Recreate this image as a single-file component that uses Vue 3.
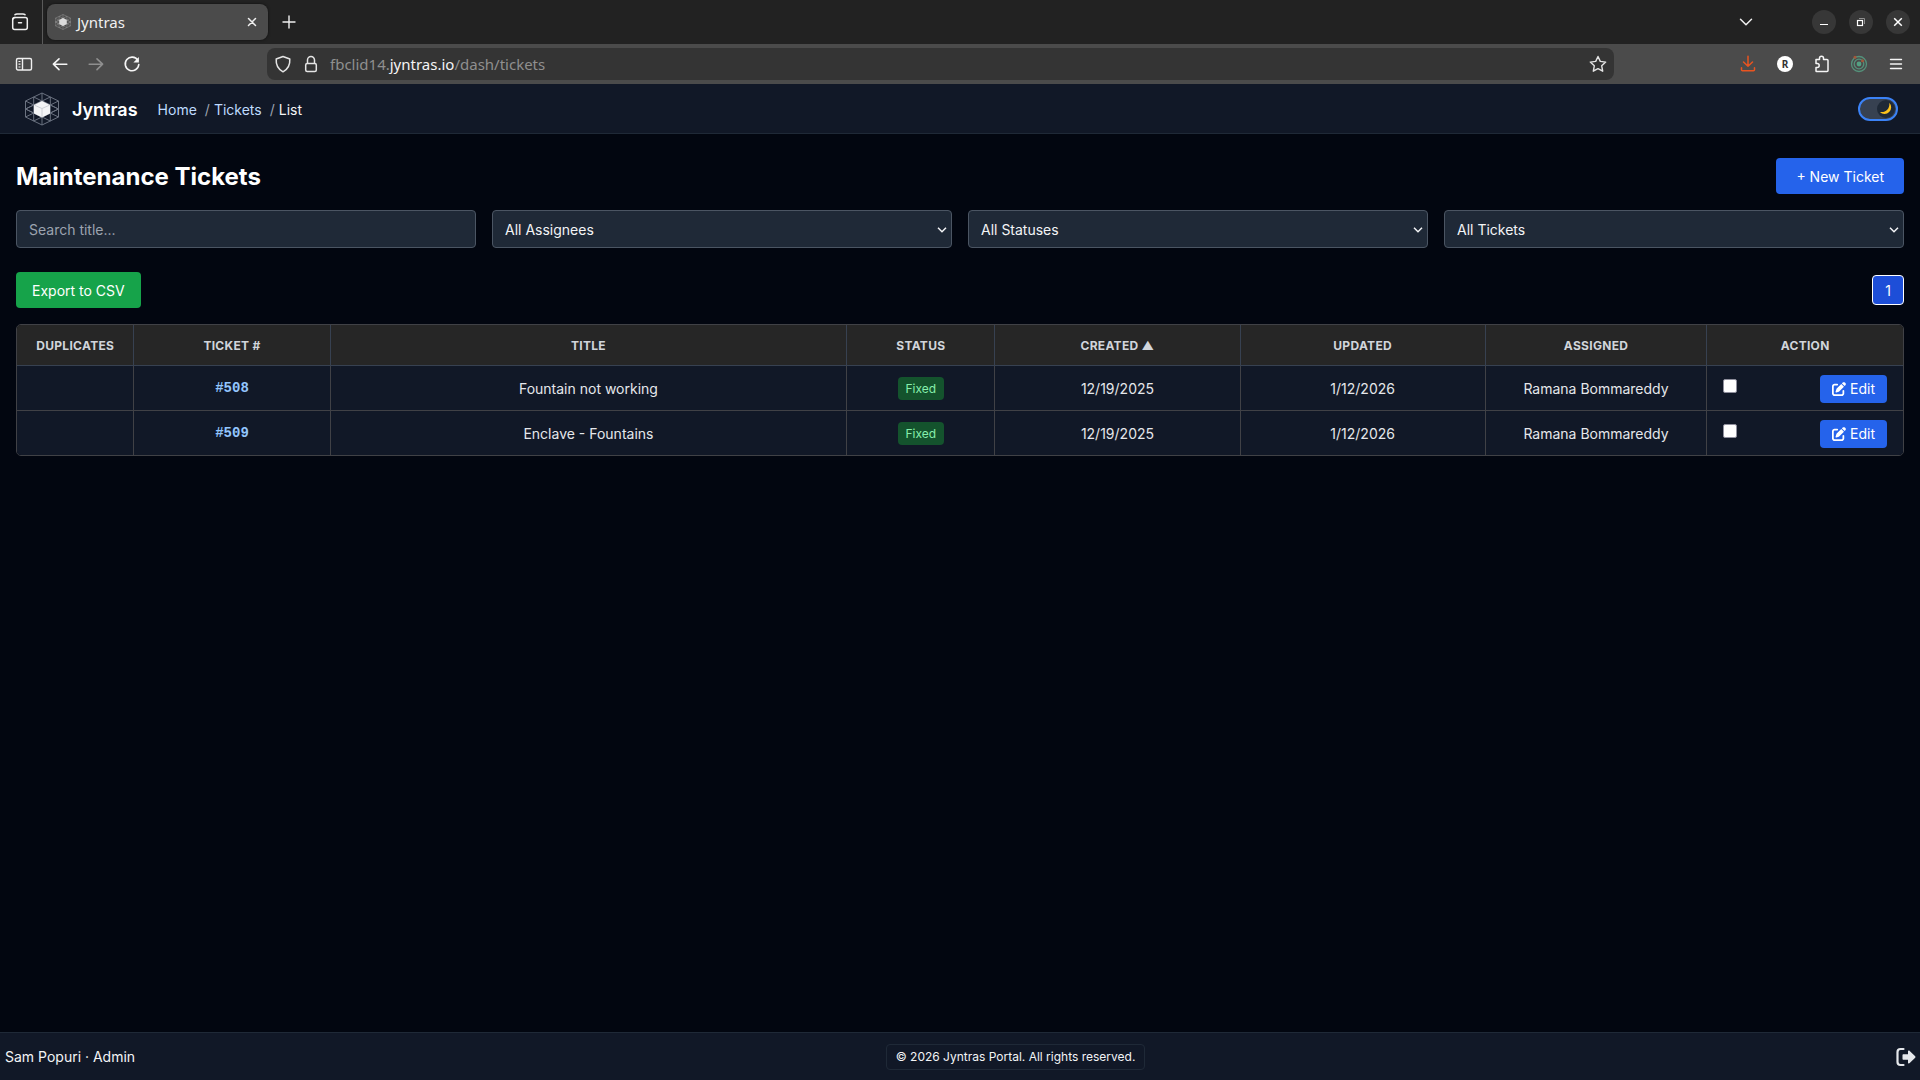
<template>
  <div class="window">
    <div class="tab-strip">
      <button class="chrome-btn view-btn" aria-label="Recent browsing">
        <svg width="18" height="18" viewBox="0 0 18 18" fill="none" stroke="#f0f0f0" stroke-width="1.5" stroke-linecap="round">
          <path d="M4 1.7C4.600 1.200 5.200 1 6 1h6c.8 0 1.400.2 2 .7" />
          <rect x="1.700" y="4.500" width="14.600" height="12" rx="2" />
          <path d="M2 6c.4-1 1-1.500 2-1.500M7.500 9.700h3" />
        </svg>
      </button>
      <div class="tab">
        <svg class="favicon" viewBox="0 0 34 34">
          <g fill="none" stroke="#8b8b8b" stroke-width="1.200">
            <path v-for="d in logoLines" :key="d" :d="d" />
          </g>
          <path d="M17 8.500L25 12.500V21L17 25.500L9 21V12.500Z" fill="#dcdcdc" />
        </svg>
        <span class="tab-title">Jyntras</span>
        <button class="chrome-btn" aria-label="Close tab">
          <svg width="10" height="10" viewBox="0 0 10 10" stroke="#f0f0f0" stroke-width="1.500" stroke-linecap="round"><path d="M1.500 1.500l7 7M8.500 1.500l-7 7" /></svg>
        </button>
      </div>
      <button class="chrome-btn new-tab" aria-label="New tab">
        <svg width="14" height="14" viewBox="0 0 14 14" stroke="#f0f0f0" stroke-width="1.400" stroke-linecap="round"><path d="M7 1v12M1 7h12" /></svg>
      </button>
      <div class="window-controls">
        <button class="chrome-btn all-tabs" aria-label="List all tabs">
          <svg width="14" height="8" viewBox="0 0 14 8" fill="none" stroke="#f0f0f0" stroke-width="1.500" stroke-linecap="round" stroke-linejoin="round"><path d="M1.500 1.200L7 6.700l5.500-5.500" /></svg>
        </button>
        <button class="chrome-btn round" aria-label="Minimize">
          <svg width="10" height="10" viewBox="0 0 10 10" stroke="#fff"><path d="M1 7.500h8" /></svg>
        </button>
        <button class="chrome-btn round" aria-label="Restore">
          <svg width="10" height="10" viewBox="0 0 10 10" fill="none"><path d="M3 1.500h5.500V7" stroke="#8f8f8f" /><rect x="1.500" y="3.500" width="5" height="5" stroke="#fff" stroke-width="1.200" /></svg>
        </button>
        <button class="chrome-btn round" aria-label="Close window">
          <svg width="10" height="10" viewBox="0 0 10 10" stroke="#fff" stroke-width="1.500"><path d="M1.200 1.200l7.600 7.600M8.800 1.200L1.200 8.800" /></svg>
        </button>
      </div>
    </div>

    <div class="toolbar">
      <div class="nav-buttons">
        <button class="chrome-btn" aria-label="Sidebar">
          <svg width="18" height="18" viewBox="0 0 18 18" fill="none" stroke="#f0f0f0" stroke-width="1.400"><rect x="1.500" y="3.500" width="15" height="11.500" rx="1.500" /><path d="M7.500 3.500V15" /><path d="M3.500 6.500h2M3.500 9.200h2M3.500 12h2" stroke-width="1.200" /></svg>
        </button>
        <button class="chrome-btn" aria-label="Back">
          <svg width="18" height="18" viewBox="0 0 18 18" fill="none" stroke="#f5f5f5" stroke-width="1.600" stroke-linecap="round" stroke-linejoin="round"><path d="M15.800 9.200H2.400M8 3.800L2.400 9.200 8 14.600" /></svg>
        </button>
        <button class="chrome-btn" aria-label="Forward" disabled>
          <svg width="18" height="18" viewBox="0 0 18 18" fill="none" stroke="#8f8f8f" stroke-width="1.600" stroke-linecap="round" stroke-linejoin="round"><path d="M2.200 9.200h13.400M10 3.800l5.600 5.400-5.600 5.400" /></svg>
        </button>
        <button class="chrome-btn" aria-label="Reload">
          <svg width="18" height="18" viewBox="0 0 18 18" fill="none" stroke="#f5f5f5" stroke-width="1.600" stroke-linecap="round"><path d="M14.800 5.300A6.800 6.800 0 1 0 15.800 9.500" /><path d="M15.900 2v5.500h-5.500z" fill="#f5f5f5" stroke="none" /></svg>
        </button>
      </div>
      <div class="url-bar">
        <svg width="18" height="18" viewBox="0 0 18 18" fill="none" stroke="#e4e4e4" stroke-width="1.500" stroke-linejoin="round"><path d="M9 1.500L15.800 4c.4 5.500-1.600 10-6.800 12.800C3.800 14 1.800 9.500 2.200 4Z" /></svg>
        <svg width="18" height="18" viewBox="0 0 18 18" fill="none" stroke="#e4e4e4" stroke-width="1.500"><rect x="3.700" y="8.500" width="10.600" height="8" rx="1.500" /><path d="M5.500 8.500V5a3.500 3.500 0 0 1 7 0v3.500" /></svg>
        <span class="url">fbclid14.<b>jyntras.io</b>/dash/tickets</span>
        <button class="chrome-btn" aria-label="Bookmark this page">
          <svg width="18" height="18" viewBox="0 0 18 18" fill="none" stroke="#e4e4e4" stroke-width="1.400" stroke-linejoin="round"><path d="M9 1.500l2.300 4.900 5.400.7-4 3.700 1 5.400L9 13.600l-4.700 2.600 1-5.400-4-3.700 5.400-.7z" /></svg>
        </button>
      </div>
      <div class="extensions">
        <button class="chrome-btn" aria-label="Downloads">
          <svg width="18" height="18" viewBox="0 0 18 18" fill="none" stroke="#e95420" stroke-width="1.500" stroke-linecap="round" stroke-linejoin="round"><path d="M9 1.200v10M4.500 7L9 11.300 13.500 7M2.500 12.800v2c0 .6.500 1 1 1h11c.5 0 1-.4 1-1v-2" /></svg>
        </button>
        <button class="chrome-btn r-badge" aria-label="R extension">R</button>
        <button class="chrome-btn" aria-label="Extensions">
          <svg width="18" height="18" viewBox="0 0 18 18" fill="none" stroke="#f5f5f5" stroke-width="1.500" stroke-linejoin="round"><path d="M3 4.500h3.500V3.200a2 2 0 0 1 4 0v1.300h3.500a1 1 0 0 1 1 1V15.500a1 1 0 0 1-1 1H3.500a.5.500 0 0 1-.5-.5v-3.500h1.200a2 2 0 0 0 0-4H3z" /></svg>
        </button>
        <button class="chrome-btn" aria-label="Tracker">
          <svg width="18" height="18" viewBox="0 0 18 18" fill="none" stroke="#54917a" stroke-width="1.300"><circle cx="9" cy="9" r="7.500" /><circle cx="9" cy="9" r="4.800" /><circle cx="9" cy="9" r="2.400" fill="#54a082" stroke="none" /><circle cx="5" cy="2.300" r="1.500" fill="#a4573a" stroke="none" /><circle cx="12.500" cy="5.800" r="1.500" fill="#a4573a" stroke="none" /></svg>
        </button>
        <button class="chrome-btn" aria-label="Menu">
          <svg width="18" height="18" viewBox="0 0 18 18" stroke="#f5f5f5" stroke-width="1.400" stroke-linecap="round"><path d="M3.500 4.500h11M3.500 9h11M3.500 13.500h11" /></svg>
        </button>
      </div>
    </div>

    <header class="app-header">
      <svg class="logo" viewBox="0 0 34 34">
        <g fill="none" stroke="#6b7280" stroke-width="1">
          <path v-for="d in logoLines" :key="d" :d="d" />
        </g>
        <path d="M17 9L25 13V21.500L17 25.500L9 21.500V13Z" fill="#f3f4f6" />
        <path d="M9.500 13.200L17 16.500L24.500 13.200M17 16.500V25" fill="none" stroke="#c3c7ce" stroke-width=".8" />
      </svg>
      <span class="brand">Jyntras</span>
      <nav class="breadcrumb">
        <a href="#">Home</a>
        <span class="slash">/</span>
        <a href="#">Tickets</a>
        <span class="slash">/</span>
        <span class="current">List</span>
      </nav>
      <button class="theme-toggle" role="switch" :aria-checked="dark" aria-label="Dark mode" @click="dark = !dark">
        <span class="knob">
          <svg width="14" height="14" viewBox="0 0 14 14"><path d="M10.300.8a6.500 6.500 0 1 1-9.400 9.100C6.500 11 11 7 10.300.8Z" fill="#fcc21b" /></svg>
        </span>
      </button>
    </header>

    <main class="content">
      <div class="row">
        <h1>Maintenance Tickets</h1>
        <button class="btn btn-new">+ New Ticket</button>
      </div>

      <div class="filters">
        <input v-model="search" type="text" class="field" placeholder="Search title..." aria-label="Search title" />
        <div v-for="label in filters" :key="label" class="select-wrap">
          <select class="field" :aria-label="label">
            <option>{{ label }}</option>
          </select>
          <svg class="chevron" width="10" height="6" viewBox="0 0 10 6" fill="none" stroke="#f3f4f6" stroke-width="1.500"><path d="M1 .8L5 4.800 9 .8" /></svg>
        </div>
      </div>

      <div class="row export-row">
        <button class="btn btn-export">Export to CSV</button>
        <button class="page">1</button>
      </div>

      <div class="table-wrap">
        <table>
          <colgroup>
            <col v-for="c in columns" :key="c.label" :style="{ width: c.width }" />
          </colgroup>
          <thead>
            <tr>
              <th v-for="c in columns" :key="c.label">{{ c.label }}</th>
            </tr>
          </thead>
          <tbody>
            <tr v-for="t in visibleTickets" :key="t.id">
              <td></td>
              <td><a href="#" class="ticket-link">#{{ t.id }}</a></td>
              <td>{{ t.title }}</td>
              <td><span class="badge">{{ t.status }}</span></td>
              <td>{{ t.created }}</td>
              <td>{{ t.updated }}</td>
              <td>{{ t.assigned }}</td>
              <td>
                <div class="actions">
                  <input v-model="selected" type="checkbox" :value="t.id" :aria-label="'Select ticket ' + t.id" />
                  <button class="edit">
                    <svg width="14" height="14" viewBox="0 0 512 512" fill="#fff"><path d="M471.600 21.700c-21.900-21.900-57.300-21.900-79.200 0L362.300 51.700l97.900 97.900 30.100-30.100c21.900-21.900 21.900-57.300 0-79.200L471.600 21.700zm-299.200 220c-6.100 6.100-10.800 13.600-13.500 21.900l-29.600 88.800c-2.900 8.600-.6 18.100 5.800 24.600s15.900 8.700 24.600 5.800l88.800-29.600c8.200-2.700 15.700-7.400 21.900-13.500L437.700 172.300 339.700 74.300 172.400 241.700zM96 64C43 64 0 107 0 160V416c0 53 43 96 96 96H352c53 0 96-43 96-96V320c0-17.700-14.300-32-32-32s-32 14.300-32 32v96c0 17.700-14.300 32-32 32H96c-17.700 0-32-14.300-32-32V160c0-17.700 14.300-32 32-32h96c17.700 0 32-14.300 32-32s-14.300-32-32-32H96z" /></svg>
                    Edit
                  </button>
                </div>
              </td>
            </tr>
          </tbody>
        </table>
      </div>
    </main>

    <footer class="app-footer">
      <span class="user">Sam Popuri · Admin</span>
      <span class="copyright">© 2026 Jyntras Portal. All rights reserved.</span>
      <button class="logout" aria-label="Log out">
        <svg width="20" height="20" viewBox="0 0 20 20"><path d="M7.500 2H4.500C2.800 2 1.500 3.200 1.500 5v10c0 1.800 1.300 3 3 3h3" fill="none" stroke="#e5e7eb" stroke-width="2.200" stroke-linecap="round" /><path d="M6.500 8.200c0-.6.400-1 1-1H12V4.600c0-1 1-1.400 1.700-.7l5.500 5.400c.4.400.4 1 0 1.400l-5.500 5.400c-.7.700-1.700.3-1.700-.7v-2.600H7.500c-.6 0-1-.4-1-1z" fill="#e5e7eb" /></svg>
      </button>
    </footer>
  </div>
</template>

<script setup>
import { ref, computed } from 'vue'

const dark = ref(true)
const search = ref('')
const selected = ref([])

const filters = ['All Assignees', 'All Statuses', 'All Tickets']

const columns = [
  { label: 'Duplicates', width: '6.2%' },
  { label: 'Ticket #', width: '10.4%' },
  { label: 'Title', width: '27.4%' },
  { label: 'Status', width: '7.85%' },
  { label: 'Created ▲', width: '13%' },
  { label: 'Updated', width: '13%' },
  { label: 'Assigned', width: '11.75%' },
  { label: 'Action', width: '10.4%' }
]

const tickets = [
  { id: 508, title: 'Fountain not working', status: 'Fixed', created: '12/19/2025', updated: '1/12/2026', assigned: 'Ramana Bommareddy' },
  { id: 509, title: 'Enclave - Fountains', status: 'Fixed', created: '12/19/2025', updated: '1/12/2026', assigned: 'Ramana Bommareddy' }
]

const visibleTickets = computed(() =>
  tickets.filter(t => t.title.toLowerCase().includes(search.value.toLowerCase()))
)

// hexagon mesh behind the cube
const logoLines = [
  'M17 1L33.500 9V25L17 33L.5 25V9Z',
  'M17 1V33M.5 9L33.500 25M33.500 9L.5 25',
  'M8.700 5V29M25.300 5V29',
  'M.5 17L17 9L33.500 17L17 25Z',
  'M8.700 5L33.500 17L8.700 29M25.300 5L.5 17L25.300 29'
]
</script>

<style>
body {
  background: #020610;
}
</style>

<style scoped>
* {
  box-sizing: border-box;
}
.window {
  min-height: 100vh;
  display: flex;
  flex-direction: column;
  font-family: Inter, "Liberation Sans", sans-serif;
  font-size: 14px;
  line-height: 20px;
  color: #e5e7eb;
}
button, input, select {
  font: inherit;
  color: inherit;
}
button {
  border: none;
  cursor: pointer;
}
svg {
  display: block;
  flex: none;
}

/* browser chrome */
.tab-strip {
  height: 44px;
  display: flex;
  align-items: center;
  background: #222;
  font-family: "Noto Sans", sans-serif;
  font-size: 15px;
}
.chrome-btn {
  display: flex;
  align-items: center;
  justify-content: center;
  padding: 0;
  background: none;
}
.view-btn {
  width: 43px;
  height: 44px;
  padding-right: 2px;
  border-right: 1px solid #5a5a5a;
}
.tab {
  width: 221px;
  height: 36px;
  margin-left: 4px;
  padding: 0 11px 0 8px;
  display: flex;
  align-items: center;
  gap: 6px;
  border-radius: 8px;
  background: #4b4b4b;
  box-shadow: 0 0 3px rgba(0, 0, 0, 0.6);
  color: #f0f0f0;
}
.favicon {
  width: 16px;
  height: 16px;
}
.tab-title {
  flex: 1;
}
.new-tab {
  margin-left: 14px;
}
.window-controls {
  margin-left: auto;
  padding-right: 10px;
  display: flex;
  align-items: center;
  gap: 13px;
}
.all-tabs {
  margin-right: 46px;
}
.round {
  width: 24px;
  height: 24px;
  border-radius: 50%;
  background: #373737;
}
.toolbar {
  height: 40px;
  padding: 0 15px;
  display: flex;
  align-items: center;
  background: #4b4b4b;
  font-family: "Noto Sans", sans-serif;
  font-size: 15px;
}
.nav-buttons {
  display: flex;
  gap: 18px;
}
.extensions {
  display: flex;
  gap: 19px;
}
.url-bar {
  flex: 1;
  height: 32px;
  margin: 0 125px 0 126px;
  padding: 0 7px;
  display: flex;
  align-items: center;
  gap: 10px;
  border-radius: 8px;
  background: #343434;
}
.url {
  flex: 1;
  color: #8f8f8f;
}
.url b {
  font-weight: 400;
  color: #f5f5f5;
}
.r-badge {
  width: 16px;
  height: 16px;
  margin: 1px;
  border-radius: 50%;
  background: #fff;
  color: #333;
  font-size: 10px;
  font-weight: 700;
}

/* app header */
.app-header {
  height: 50px;
  padding: 0 22px 0 25px;
  display: flex;
  align-items: center;
  background: #111827;
  border-bottom: 1px solid #1f2937;
}
.logo {
  width: 34px;
  height: 34px;
}
.brand {
  margin: 0 20px 0 13px;
  padding-top: 2px;
  font-size: 18px;
  font-weight: 600;
  color: #fff;
}
.breadcrumb {
  padding-top: 2px;
  display: flex;
}
.breadcrumb a {
  color: #bfdbfe;
  text-decoration: none;
}
.slash {
  margin: 0 4px 0 8px;
  color: #9ca3af;
}
.current {
  color: #f3f4f6;
}
.theme-toggle {
  width: 40px;
  height: 24px;
  margin-left: auto;
  padding: 0 1px;
  display: flex;
  align-items: center;
  justify-content: flex-end;
  border: 2px solid #3b82f6;
  border-radius: 12px;
  background: #374151;
}
.knob {
  width: 18px;
  height: 18px;
  display: flex;
  align-items: center;
  justify-content: center;
  border-radius: 50%;
  background: #1f2937;
}

/* ticket list */
.content {
  flex: 1;
  padding: 24px 16px;
}
.row {
  display: flex;
  align-items: center;
  justify-content: space-between;
}
h1 {
  margin: 0;
  padding-top: 2px;
  font-size: 24px;
  line-height: 32px;
  font-weight: 700;
  color: #fff;
}
.btn {
  padding: 9px 16px 7px;
  border-radius: 4px;
  color: #fff;
}
.btn-new {
  padding: 9px 20px 7px;
  background: #2563eb;
}
.btn-export {
  background: #16a34a;
}
.filters {
  margin-top: 16px;
  display: grid;
  grid-template-columns: repeat(4, 1fr);
  gap: 16px;
}
.field {
  width: 100%;
  height: 38px;
  padding: 8px 12px;
  border: 1px solid #4b5563;
  border-radius: 4px;
  background: #1f2937;
  color: #f3f4f6;
  appearance: none;
}
select.field {
  padding: 9px 12px 7px;
}
.field::placeholder {
  color: #9ca3af;
}
.select-wrap {
  position: relative;
}
.chevron {
  position: absolute;
  right: 5px;
  top: 17px;
  pointer-events: none;
}
.export-row {
  margin: 24px 0 16px;
}
.page {
  width: 32px;
  height: 30px;
  padding: 1px 0 0;
  border: 1px solid #fff;
  border-radius: 4px;
  background: #1d4ed8;
  color: #fff;
}
.table-wrap {
  border: 1px solid #404146;
  border-radius: 5px;
  overflow: hidden;
}
table {
  width: 100%;
  table-layout: fixed;
  border-collapse: collapse;
}
th, td {
  text-align: center;
  border-right: 1px solid #404146;
}
th:last-child, td:last-child {
  border-right: none;
}
th {
  height: 40px;
  padding: 2px 8px 0;
  background: #262626;
  border-color: #374151;
  border-bottom: 1px solid #374151;
  font-size: 12px;
  font-weight: 700;
  text-transform: uppercase;
  letter-spacing: 0.3px;
  color: #d1d5db;
}
td {
  height: 45px;
  padding: 2px 16px 0;
  background: #111827;
}
tbody tr + tr td {
  border-top: 1px solid #404146;
}
.ticket-link {
  display: inline-block;
  padding-bottom: 3px;
  font-family: "Liberation Mono", monospace;
  font-weight: 700;
  color: #93c5fd;
  text-decoration: none;
}
.badge {
  display: inline-block;
  padding: 2px 8px 1px;
  border-radius: 4px;
  background: #14532d;
  color: #86efac;
  font-size: 12px;
}
.actions {
  display: flex;
  align-items: center;
  justify-content: space-between;
}
.actions input {
  width: 14px;
  height: 14px;
  margin: 0 0 6px;
  appearance: none;
  border: 1px solid #8f8f9d;
  border-radius: 2px;
  background: #fff;
}
.actions input:checked {
  background: #2563eb;
}
.edit {
  height: 28px;
  padding: 0 12px;
  display: flex;
  align-items: center;
  gap: 4px;
  border-radius: 4px;
  background: #2563eb;
  color: #fff;
}

/* footer */
.app-footer {
  height: 48px;
  padding: 0 4px 0 5px;
  display: flex;
  align-items: center;
  justify-content: space-between;
  background: #111827;
  border-top: 1px solid #1f2937;
}
.user {
  color: #f3f4f6;
}
.copyright {
  padding: 2px 9px;
  border: 1px solid #1f2937;
  border-radius: 4px;
  font-size: 12px;
  color: #f3f4f6;
}
.logout {
  padding: 0;
  background: none;
}
</style>
